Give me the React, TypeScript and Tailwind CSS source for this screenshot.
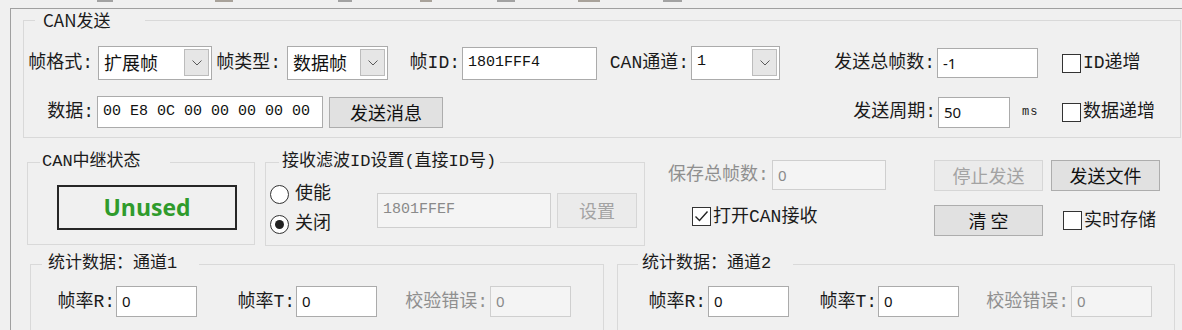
import React from 'react';
import clsx from 'clsx';

const LBL = "font-['Liberation_Mono','Noto_Sans_CJK_SC',monospace] text-[18px] leading-[22px] whitespace-nowrap";
const LEG = "font-['Liberation_Mono','Noto_Sans_CJK_SC',monospace] text-[17px] leading-[24px] whitespace-nowrap text-[#1b1b1b]";
const SANS = "font-['Noto_Sans_CJK_SC','Noto_Sans',sans-serif]";
const MONO = "font-['Liberation_Mono','Noto_Sans_CJK_SC',monospace]";

function Label({ className, gray, left, children }: { className?: string; gray?: boolean; left?: boolean; children: React.ReactNode }) {
  return (
    <span className={clsx(LBL, 'shrink-0', left ? 'text-left' : 'text-right', gray ? 'text-[#8f8f8f]' : 'text-[#1b1b1b]', className)}>
      {children}
    </span>
  );
}

function Input({ className, value, mono, disabled }: { className?: string; value: string; mono?: boolean; disabled?: boolean }) {
  return (
    <div
      className={clsx(
        'shrink-0 flex items-center border pl-[5px] whitespace-nowrap',
        disabled ? 'border-[#cfcfcf] bg-[#f4f4f4] text-[#8a8a8a]' : 'border-[#ababab] bg-white text-[#111]',
        mono ? `${MONO} text-[15px]` : "font-['Noto_Sans',sans-serif] text-[15px]",
        className
      )}
    >
      {value}
    </div>
  );
}

function Chevron() {
  return (
    <svg width="10" height="6" viewBox="0 0 10 6">
      <path d="M0.5 0.5l4.5 4.5 4.5-4.5" fill="none" stroke="#5a5a5a" strokeWidth="1" />
    </svg>
  );
}

function Combo({ className, value, mono }: { className?: string; value: string; mono?: boolean }) {
  return (
    <div className={clsx('shrink-0 h-[34px] flex items-center border border-[#ababab] bg-white p-[2px] pb-[3px]', className)}>
      <span className={clsx('flex-1 pl-[3px] text-[#111] whitespace-nowrap', mono ? `${MONO} text-[15px]` : `${SANS} text-[18px]`)}>
        {value}
      </span>
      <div className="w-[25px] h-full flex items-center justify-center border border-[#bcbcbc] bg-[#e6e6e6]">
        <Chevron />
      </div>
    </div>
  );
}

function Button({ className, disabled, children }: { className?: string; disabled?: boolean; children: React.ReactNode }) {
  return (
    <div
      className={clsx(
        SANS,
        'shrink-0 h-[31px] flex items-center justify-center border text-[18px] whitespace-pre',
        disabled ? 'border-[#d6d6d6] bg-[#ebebeb] text-[#a3a3a3]' : 'border-[#adadad] bg-[#e1e1e1] text-[#111]',
        className
      )}
    >
      {children}
    </div>
  );
}

function Check({ className, checked, children }: { className?: string; checked?: boolean; children: React.ReactNode }) {
  return (
    <div className={clsx('shrink-0 flex items-center', className)}>
      <span className="w-[19px] h-[19px] border border-[#333] bg-white flex items-center justify-center">
        {checked && (
          <svg width="15" height="13" viewBox="0 0 15 13">
            <path d="M1.5 6.5l4 4 8-9" fill="none" stroke="#222" strokeWidth="1.4" />
          </svg>
        )}
      </span>
      <Label className="ml-[2px]">{children}</Label>
    </div>
  );
}

function Radio({ checked, children }: { checked?: boolean; children: React.ReactNode }) {
  return (
    <div className="h-[30px] flex items-center">
      <span className="w-[19px] h-[19px] rounded-full border border-[#333] bg-white flex items-center justify-center">
        {checked && <span className="w-[9px] h-[9px] rounded-full bg-[#222]" />}
      </span>
      <Label className="ml-[6px]">{children}</Label>
    </div>
  );
}

export default function App() {
  return (
    <div className="w-[1182px] h-[330px] overflow-hidden bg-[#f0f0f0] flex flex-col">
      {/* bottom edge of the toolbar above */}
      <div className="h-[8px] shrink-0 flex items-start">
        <div className="ml-[97px] w-[16px] h-[2px] bg-[#a2a2a2]" />
        <div className="ml-[102px] w-[18px] h-[2px] bg-[#a8a29a]" />
        <div className="ml-[105px] w-[14px] h-[2px] bg-[#a2a2a2]" />
        <div className="ml-[68px] w-[12px] h-[2px] bg-[#a8a29a]" />
        <div className="ml-[65px] w-[18px] h-[2px] bg-[#a2a2a2]" />
        <div className="ml-[63px] w-[22px] h-[2px] bg-[#a8a29a]" />
        <div className="ml-[63px] w-[19px] h-[2px] bg-[#a2a2a2]" />
      </div>

      <div className="ml-[10px] flex-1 border-l border-t border-[#a0a0a0] flex flex-col">
        {/* CAN发送 */}
        <fieldset className="ml-[12px] w-[1158px] border border-[#d9d9d9] pb-[9px]">
          <legend className={clsx(SANS, 'ml-[11px] w-[110px] pl-[8px] text-[17px] leading-[22px] text-[#1b1b1b]')}>CAN发送</legend>
          <div className="mt-[15px] h-[34px] flex items-center">
            <Label className="w-[72px] pr-[3px]">帧格式:</Label>
            <Combo className="ml-[2px] w-[114px]" value="扩展帧" />
            <Label className="w-[73px] pr-[4px]">帧类型:</Label>
            <Combo className="ml-[2px] w-[101px]" value="数据帧" />
            <Label className="w-[72px]">帧ID:</Label>
            <Input className="ml-[2px] w-[135px] h-[33px]" value="1801FFF4" mono />
            <Label className="w-[92px]">CAN通道:</Label>
            <Combo className="ml-[2px] w-[89px]" value="1" mono />
            <Label className="w-[155px]">发送总帧数:</Label>
            <Input className="ml-[2px] w-[101px] h-[30px]" value="-1" />
            <Check className="ml-[24px]">ID递增</Check>
          </div>
          <div className="mt-[16px] h-[32px] flex items-center">
            <Label className="w-[71px] pr-[1px]">数据:</Label>
            <Input className="ml-[2px] w-[226px] h-[32px]" value="00 E8 0C 00 00 00 00 00" mono />
            <Button className="ml-[6px] w-[114px]">发送消息</Button>
            <Label className="w-[493px]">发送周期:</Label>
            <Input className="ml-[2px] w-[72px] h-[31px]" value="50" />
            <span className={clsx(MONO, 'ml-[12px] w-[20px] text-[12px] tracking-[1px] text-[#222]')}>ms</span>
            <Check className="ml-[20px]">数据递增</Check>
          </div>
        </fieldset>

        <div className="mt-[12px] flex items-start">
          {/* CAN中继状态 */}
          <fieldset className="ml-[16px] w-[228px] h-[95px] border border-[#d9d9d9]">
            <legend className={clsx(LEG, 'ml-[12px] w-[130px] pl-[2px]')}>CAN中继状态</legend>
            <div className="mt-[11px] ml-[29px] w-[180px] h-[45px] border-2 border-[#262626] flex items-center justify-center">
              <span className="font-['Open_Sans',sans-serif] font-bold text-[23px] leading-none text-[#2f9b2c]">Unused</span>
            </div>
          </fieldset>

          {/* 接收滤波 */}
          <fieldset className="ml-[10px] w-[380px] h-[96px] border border-[#d9d9d9]">
            <legend className={clsx(LEG, 'ml-[13px] w-[221px] pl-[3px]')}>接收滤波ID设置(直接ID号)</legend>
            <div className="flex items-start">
              <div className="ml-[4px] mt-[5px] w-[107px] flex flex-col">
                <Radio>使能</Radio>
                <Radio checked>关闭</Radio>
              </div>
              <Input className="mt-[19px] w-[174px] h-[35px]" value="1801FFEF" mono disabled />
              <Button className="mt-[19px] ml-[6px] w-[80px] h-[35px]" disabled>设置</Button>
            </div>
          </fieldset>

          {/* 右侧控制 */}
          <div className="ml-[23px] flex flex-col">
            <div className="mt-[9px] h-[32px] flex items-center">
              <Label className="w-[104px]" left gray>保存总帧数:</Label>
              <Input className="w-[114px] h-[30px]" value="0" disabled />
              <Button className="ml-[48px] w-[109px]" disabled>停止发送</Button>
              <Button className="ml-[8px] w-[109px]">发送文件</Button>
            </div>
            <div className="mt-[14px] h-[31px] flex items-center">
              <div className="w-[266px] pl-[24px] -mt-[8px]">
                <Check checked>打开CAN接收</Check>
              </div>
              <Button className="w-[109px]">清 空</Button>
              <Check className="ml-[20px]">实时存储</Check>
            </div>
          </div>
        </div>

        <div className="mt-[6px] flex items-start">
          {/* 统计数据 通道1 */}
          <fieldset className="ml-[19px] w-[574px] h-[90px] border border-[#d9d9d9]">
            <legend className={clsx(LEG, 'ml-[11px] w-[157px] pl-[6px]')}>统计数据：通道1</legend>
            <div className="mt-[10px] h-[31px] flex items-center">
              <Label className="w-[84px]">帧率R:</Label>
              <Input className="ml-[1px] w-[81px] h-[31px]" value="0" />
              <Label className="w-[98px]">帧率T:</Label>
              <Input className="ml-[1px] w-[81px] h-[31px]" value="0" />
              <Label className="w-[111px]" gray>校验错误:</Label>
              <Input className="ml-[2px] w-[81px] h-[31px]" value="0" disabled />
            </div>
          </fieldset>

          {/* 统计数据 通道2 */}
          <fieldset className="ml-[13px] w-[558px] h-[90px] border border-[#d9d9d9]">
            <legend className={clsx(LEG, 'ml-[20px] w-[155px] pl-[4px]')}>统计数据：通道2</legend>
            <div className="mt-[10px] h-[31px] flex items-center">
              <Label className="w-[88px]">帧率R:</Label>
              <Input className="ml-[2px] w-[81px] h-[31px]" value="0" />
              <Label className="w-[88px]">帧率T:</Label>
              <Input className="ml-[1px] w-[81px] h-[31px]" value="0" />
              <Label className="w-[110px]" gray>校验错误:</Label>
              <Input className="ml-[2px] w-[81px] h-[31px]" value="0" disabled />
            </div>
          </fieldset>
        </div>
      </div>
    </div>
  );
}
